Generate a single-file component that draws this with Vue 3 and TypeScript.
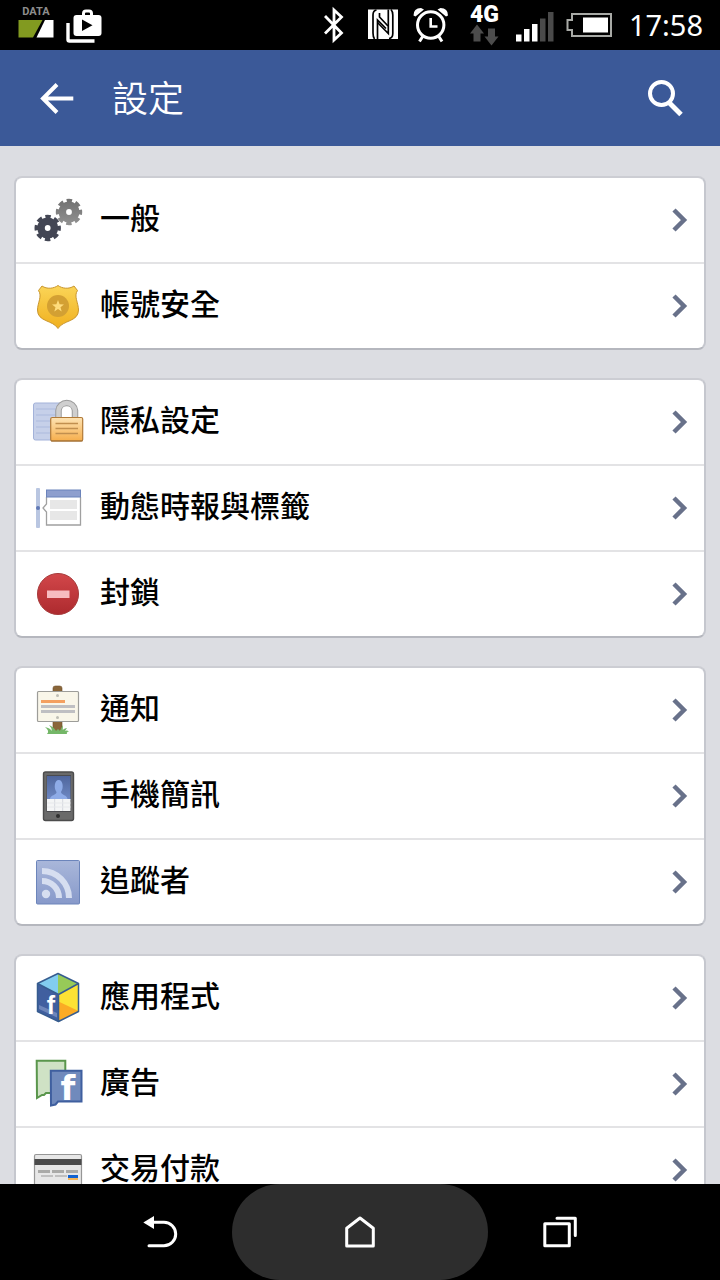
<script setup lang="ts">
interface Item {
  icon: string
  label: string
}

const groups: Item[][] = [
  [
    { icon: 'gears', label: '一般' },
    { icon: 'shield', label: '帳號安全' },
  ],
  [
    { icon: 'lock', label: '隱私設定' },
    { icon: 'timeline', label: '動態時報與標籤' },
    { icon: 'block', label: '封鎖' },
  ],
  [
    { icon: 'sign', label: '通知' },
    { icon: 'phone', label: '手機簡訊' },
    { icon: 'feed', label: '追蹤者' },
  ],
  [
    { icon: 'cube', label: '應用程式' },
    { icon: 'ads', label: '廣告' },
    { icon: 'card', label: '交易付款' },
  ],
]
</script>

<template>
  <div class="screen">
    <div class="status">
      <div class="status-left">
        <svg width="36" height="50" viewBox="0 0 36 50">
          <text x="18" y="15" text-anchor="middle" class="data-text">DATA</text>
          <path d="M0.5 20H24.5L15 37.5H0.5Z" fill="#829a20" />
          <path d="M27 20H35.5V37.5H18.5Z" fill="#fff" />
        </svg>
        <svg width="36" height="50" viewBox="0 0 36 50">
          <path d="M2 23V39.5Q2 41 3.5 41H28.5" fill="none" stroke="#fff" stroke-width="3.4" />
          <path d="M17.5 16V13.5Q17.5 11 20 11H23Q25.5 11 25.5 13.5V16" fill="none" stroke="#fff" stroke-width="3" />
          <rect x="7.5" y="15" width="28" height="21" rx="3" fill="#fff" />
          <path d="M16 19.5V31L26.5 25.3Z" fill="#000" />
        </svg>
      </div>
      <div class="status-right">
        <svg width="32" height="50" viewBox="0 0 32 50">
          <path d="M1 16L17.5 33L10 40V10L17.5 17L1 33.5" fill="none" stroke="#fff" stroke-width="2.8" />
        </svg>
        <svg width="32" height="50" viewBox="0 0 32 50">
          <rect y="9.500" width="30" height="29.500" fill="#fff" />
          <g fill="none" stroke="#000" stroke-width="1.700">
            <path d="M8.500 10Q5 10.500 5 15V33Q5 37 6.500 39" />
            <path d="M23 9.500Q24.800 11.500 24.800 15V33.500Q24.800 38 21 38.500" />
            <path d="M9.500 39V20L18 28.500" />
            <path d="M20.300 9.500V33.500L9.500 22.500" />
            <path d="M20 26L11.500 17V13" />
          </g>
        </svg>
        <svg width="44" height="50" viewBox="0 0 44 50">
          <path d="M1.500 15.500Q1.500 8 9 8L12 9.500L3.500 16.500ZM36 15.500Q36 8 28.500 8L25.500 9.500L34 16.500Z" fill="#fff" />
          <circle cx="18.700" cy="25" r="13.200" fill="none" stroke="#fff" stroke-width="3" />
          <path d="M18.700 18V26.500H25.500" fill="none" stroke="#fff" stroke-width="2.600" />
          <path d="M11 36L7.500 41.500M26.500 36L30 41.500" stroke="#fff" stroke-width="3" />
        </svg>
        <svg width="36" height="50" viewBox="0 0 36 50">
          <text x="16.500" y="22" text-anchor="middle" class="net-text">4G</text>
          <path d="M9 24.500L16 33.500H12.500V41.500H5.500V33.500H2Z" fill="#4c4c4c" />
          <path d="M23.500 45.500L30.500 36.500H27V28.500H20V36.500H16.500Z" fill="#4c4c4c" />
        </svg>
        <svg width="38" height="50" viewBox="0 0 38 50">
          <path d="M0 34.500H5.500V41.500H0ZM8 29H13.500V41.500H8ZM16 24H21.500V41.500H16Z" fill="#fff" />
          <path d="M24 18.500H29.500V41.500H24ZM32 12H37.500V41.500H32Z" fill="#4a4a4a" />
        </svg>
        <svg width="51" height="50" viewBox="0 0 51 50">
          <path d="M6 14H45V36H6V30H1.500V20H6Z" fill="none" stroke="#a8aaa6" stroke-width="2" />
          <rect x="17" y="17.500" width="25" height="15" fill="#fff" />
        </svg>
        <time class="clock">17:58</time>
      </div>
    </div>

    <header class="bar">
      <button type="button" class="bare" aria-label="返回">
        <svg width="34" height="32" viewBox="0 0 34 32">
          <path d="M33.300 16.500H3M17 2.500L3 16.500L17 30.500" fill="none" stroke="#fff" stroke-width="4" />
        </svg>
      </button>
      <h1>設定</h1>
      <button type="button" class="bare" aria-label="搜尋">
        <svg width="36" height="38" viewBox="0 0 36 38">
          <circle cx="13.500" cy="14.500" r="11.500" fill="none" stroke="#fff" stroke-width="4" />
          <path d="M21.500 24L33 35.500" stroke="#fff" stroke-width="5" />
        </svg>
      </button>
    </header>

    <main class="content">
      <nav v-for="(group, g) in groups" :key="g" class="group">
        <a v-for="item in group" :key="item.icon" class="row" href="#">
          <svg class="icon" width="56" height="60" viewBox="0 0 56 60" aria-hidden="true">
            <template v-if="item.icon === 'gears'">
              <defs>
                <linearGradient id="gearLight" gradientUnits="userSpaceOnUse" x1="0" y1="9" x2="0" y2="35">
                  <stop offset="0" stop-color="#707070" /><stop offset="1" stop-color="#929292" />
                </linearGradient>
              </defs>
              <g fill="none" stroke="url(#gearLight)">
                <circle cx="39" cy="22" r="6.700" stroke-width="7.600" />
                <circle cx="39" cy="22" r="11" stroke-width="4.400" stroke-dasharray="5.200 3.440" stroke-dashoffset="2.600" />
              </g>
              <g fill="none" stroke="#434654">
                <circle cx="17.700" cy="38" r="6.700" stroke-width="7.600" />
                <circle cx="17.700" cy="38" r="11" stroke-width="4.400" stroke-dasharray="5.200 3.440" stroke-dashoffset="2.600" />
              </g>
            </template>

            <template v-else-if="item.icon === 'shield'">
              <defs>
                <linearGradient id="gold" x1="0" y1="0" x2="0" y2="1">
                  <stop offset="0" stop-color="#fbd558" /><stop offset="1" stop-color="#f0b01f" />
                </linearGradient>
              </defs>
              <path d="M28 9.500C24 12.500 17 13.500 12 10L8.500 14.500C12.500 20 7.500 27 7.500 34C7.500 46 23 44 28 52.500C33 44 48.500 46 48.500 34C48.500 27 43.500 20 47.500 14.500L44 10C39 13.500 32 12.500 28 9.500Z" fill="url(#gold)" stroke="#c9962f" />
              <circle cx="28" cy="30" r="11" fill="#d3a033" />
              <path d="M28 24L29.600 28.200L34 28.400L30.500 31.200L31.700 35.500L28 33L24.300 35.500L25.500 31.200L22 28.400L26.400 28.200Z" fill="#ffdc7c" />
            </template>

            <template v-else-if="item.icon === 'lock'">
              <defs>
                <linearGradient id="brass" x1="0" y1="0" x2="0" y2="1">
                  <stop offset="0" stop-color="#fde3b4" /><stop offset="1" stop-color="#f6ae4c" />
                </linearGradient>
              </defs>
              <rect x="3.500" y="11" width="32" height="37" rx="2" fill="#c6d0e9" stroke="#a3b2d9" />
              <path d="M6 17H26M6 23H26M6 29H21M6 35H21M6 41H21" stroke="#b9c5e3" stroke-width="2" />
              <path d="M28.500 26V18.500A8.300 8.300 0 0 1 45 18.500V26" fill="#fff" stroke="#9b9b9b" stroke-width="6.500" />
              <path d="M28.500 26V18.500A8.300 8.300 0 0 1 45 18.500V26" fill="none" stroke="#cfcfcf" stroke-width="4.500" />
              <rect x="20.700" y="25.500" width="32" height="23.500" rx="1.500" fill="url(#brass)" stroke="#b17a38" stroke-width="1.200" />
              <path d="M21 49H52.500" stroke="#9c6c35" />
              <path d="M25.500 31.500H48M25.500 36.500H48M25.500 41.500H48" stroke="#c18f4f" stroke-width="1.600" />
            </template>

            <template v-else-if="item.icon === 'timeline'">
              <rect x="6" y="10" width="4" height="40" rx="1" fill="#b9c6e1" />
              <circle cx="8" cy="30" r="2" fill="#6079b5" />
              <path d="M16.500 19V26L13 30L16.500 34V47H50.500V19" fill="#fff" stroke="#a0a0a0" stroke-width="1.300" />
              <rect x="16.500" y="12" width="34" height="7" fill="#8e9fce" stroke="#6b83bb" />
              <path d="M20 22H47V31H20ZM20 33H47V42H20Z" fill="#e7e7e7" />
            </template>

            <template v-else-if="item.icon === 'block'">
              <defs>
                <linearGradient id="red" x1="0" y1="0" x2="0" y2="1">
                  <stop offset="0" stop-color="#d2474a" /><stop offset="1" stop-color="#ad2a2e" />
                </linearGradient>
              </defs>
              <circle cx="28" cy="30" r="20.500" fill="url(#red)" stroke="#a63a3a" />
              <rect x="17" y="26.500" width="22.500" height="7.500" fill="#f7bcc0" />
            </template>

            <template v-else-if="item.icon === 'sign'">
              <path d="M23 8Q23 6 25.500 6H29.500Q32 6 32 8V50Q27 52 23 50Z" fill="#8a6639" stroke="#6d4f2a" stroke-width="0.600" />
              <rect x="7.500" y="11.500" width="41" height="30" rx="1" fill="#f9f6e9" stroke="#9d9d99" stroke-width="1.200" />
              <circle cx="27.500" cy="15.500" r="1.500" fill="#bdbdb5" />
              <circle cx="27.500" cy="37.500" r="1.500" fill="#bdbdb5" />
              <path d="M11 21.500H35" stroke="#f4a060" stroke-width="3" />
              <path d="M11 26.500H45M11 31.500H45" stroke="#bfbfc2" stroke-width="3" />
              <path d="M17 54Q20 51 15 47Q20 48 22 51Q22 48 19 45Q24 47 26 51L28 49L30 51Q31 48 33 45L32.500 50Q35 48 37 48L35 51Q37 50 39 51.500Q36 52 37 54Z" fill="#74b768" />
            </template>

            <template v-else-if="item.icon === 'phone'">
              <defs>
                <linearGradient id="display" x1="0" y1="0" x2="0" y2="1">
                  <stop offset="0" stop-color="#4f669d" /><stop offset="1" stop-color="#6f89c4" />
                </linearGradient>
              </defs>
              <rect x="13.500" y="6" width="30" height="48.500" rx="2" fill="#6a6a6a" stroke="#4c4c4c" stroke-width="1.400" />
              <rect x="16.500" y="9" width="24.500" height="37" fill="#4b4b4f" />
              <rect x="17" y="10" width="23.500" height="24" fill="url(#display)" />
              <path d="M20 33C20 29 27 29 26.500 26C23.500 22 24.500 14 28.700 14C33 14 34 22 31 26C31 29 37.500 29 37.500 33Z" fill="#8eabe7" />
              <rect x="17" y="33" width="23.500" height="12" fill="#f4f5f6" />
              <path d="M24.700 33V45M32.700 33V45" stroke="#d5d8de" />
              <path d="M17 37H40.500M17 41H40.500" stroke="#e6e8eb" />
              <circle cx="28" cy="50" r="2" fill="#2f2f2f" />
            </template>

            <template v-else-if="item.icon === 'feed'">
              <defs>
                <linearGradient id="feedBlue" x1="0" y1="0" x2="0" y2="1">
                  <stop offset="0" stop-color="#a9b7da" /><stop offset="1" stop-color="#8799ca" />
                </linearGradient>
              </defs>
              <rect x="6.500" y="8.500" width="43" height="43.500" rx="1" fill="url(#feedBlue)" stroke="#6c85bb" />
              <circle cx="16" cy="42" r="4.200" fill="#d6def0" />
              <path d="M12 29A17 17 0 0 1 29 46M12 19A27 27 0 0 1 39 46" fill="none" stroke="#d6def0" stroke-width="6" />
            </template>

            <template v-else-if="item.icon === 'cube'">
              <path d="M28 5.500V26.500L7.500 15.500Z" fill="#82cdf0" />
              <path d="M28 5.500L48.500 15.500L28 26.500Z" fill="#97ca58" />
              <path d="M7.500 15.500L28.500 26.500V53.500L7.500 43.500Z" fill="#405f9f" />
              <path d="M28.500 26.500L48.500 15.500V43.500L28.500 53.500Z" fill="#fde234" />
              <path d="M28.500 33.500L48.500 43L28.500 53.500Z" fill="#fbab25" />
              <path d="M9 37L27 45V49.500L9 41Z" fill="#6d86ba" />
              <path d="M28 5.500L48.500 15.500V43.500L28.500 53.500L7.500 43.500V15.500ZM7.500 15.500L28.500 26.500L48.500 15.500M28.500 26.500V53.500" fill="none" stroke="#365c8f" stroke-width="1.500" stroke-linejoin="round" />
              <text x="21" y="46" text-anchor="middle" class="cube-f">f</text>
            </template>

            <template v-else-if="item.icon === 'ads'">
              <path d="M6.700 6.700H35.300V39H16L14 41H12L7 44Z" fill="#cfe2c5" stroke="#5a964c" stroke-width="2" />
              <path d="M20.800 16.800H51.500V47.500H28L25.500 50.500L21 51.500Z" fill="#708abc" stroke="#3f5f9f" stroke-width="2" />
              <text x="38" y="46" text-anchor="middle" class="ads-f">f</text>
            </template>

            <template v-else>
              <rect x="4.500" y="14.500" width="47" height="33" rx="1.500" fill="#e7e7e7" stroke="#969696" stroke-width="1.200" />
              <rect x="4.500" y="19" width="47" height="6" fill="#4b4b4b" />
              <path d="M8 31.500H20M22 31.500H34M36 31.500H48" stroke="#aaaaa8" stroke-width="3" />
              <path d="M11 36H23M25 36H37" stroke="#c0c0c0" stroke-width="2" />
              <rect x="38" y="35" width="10" height="3" fill="#1262d0" />
              <rect x="38" y="38" width="10" height="2" fill="#f5b455" />
            </template>
          </svg>
          <span class="label">{{ item.label }}</span>
          <svg width="16" height="24" viewBox="0 0 16 24" aria-hidden="true">
            <path d="M2 2L12 12L2 22" fill="none" stroke="#68718a" stroke-width="4.500" />
          </svg>
        </a>
      </nav>
    </main>

    <footer class="nav">
      <button type="button" class="key" aria-label="返回">
        <svg width="40" height="40" viewBox="0 0 40 40">
          <path d="M3.300 10.500L14 4V17Z" fill="#fff" />
          <path d="M13 10.300H24A11.700 11.700 0 0 1 24 33.700H9" fill="none" stroke="#fff" stroke-width="3" stroke-linecap="round" />
        </svg>
      </button>
      <button type="button" class="key home" aria-label="主畫面">
        <svg width="40" height="40" viewBox="0 0 40 40">
          <path d="M20 6L33.300 16.300V34H6.700V16.300Z" fill="none" stroke="#fff" stroke-width="3" stroke-linejoin="round" />
        </svg>
      </button>
      <button type="button" class="key" aria-label="最近使用">
        <svg width="40" height="40" viewBox="0 0 40 40">
          <g fill="none" stroke="#fff" stroke-width="3" stroke-linejoin="round">
            <rect x="4.800" y="11.800" width="24.500" height="22" />
            <path d="M17 6.300H35.300V23.500" stroke-linecap="round" />
          </g>
        </svg>
      </button>
    </footer>
  </div>
</template>

<style>
body {
  margin: 0;
}
</style>

<style scoped>
.screen {
  display: flex;
  flex-direction: column;
  height: 100vh;
  background: #dcdde2;
  font-family: "Noto Sans CJK TC", "Noto Sans", sans-serif;
}

svg {
  display: block;
  flex: none;
}

button {
  margin: 0;
  padding: 0;
  border: 0;
  background: none;
  cursor: pointer;
}

.status {
  display: flex;
  flex: none;
  justify-content: space-between;
  height: 50px;
  padding: 0 17px 0 18px;
  background: #000;
}

.status-left,
.status-right {
  display: flex;
  align-items: center;
  gap: 12px;
}

.clock {
  color: #fff;
  font-family: "Noto Sans", sans-serif;
  font-size: 29px;
  line-height: 50px;
}

.data-text {
  fill: #8d8d8d;
  font: 700 11px Roboto, sans-serif;
}

.net-text {
  fill: #fff;
  font: 900 23px Roboto, sans-serif;
}

.cube-f {
  fill: #fff;
  font: 700 25px "Liberation Sans", sans-serif;
}

.ads-f {
  fill: #fff;
  font: 700 34px "DejaVu Sans", sans-serif;
}

.bar {
  display: flex;
  flex: none;
  align-items: center;
  height: 96px;
  padding: 0 36px 0 40px;
  background: #3b5998;
}

.bar h1 {
  flex: 1;
  margin: 0 0 0 38px;
  padding-bottom: 4px;
  color: #fff;
  font-size: 36px;
  font-weight: 350;
  line-height: 48px;
}

.content {
  display: flex;
  flex: 1;
  flex-direction: column;
  gap: 28px;
  min-height: 0;
  padding: 30px 14px;
  overflow-y: auto;
  scrollbar-width: none;
}

.group {
  flex: none;
  border: 2px solid;
  border-color: #cccdd3 #c5c7ce #b5b7be;
  border-radius: 8px;
  background: #fff;
}

.row {
  display: flex;
  align-items: center;
  height: 84px;
  padding: 0 16px 0 14px;
  color: #000;
  text-decoration: none;
}

.row + .row {
  border-top: 2px solid #e3e3e5;
}

.label {
  flex: 1;
  margin-left: 14px;
  padding-bottom: 8px;
  font-size: 30px;
  font-weight: 500;
  line-height: 40px;
}

.nav {
  display: flex;
  flex: none;
  justify-content: center;
  height: 96px;
  background: #000;
}

.key {
  display: flex;
  align-items: center;
  justify-content: center;
  width: 144px;
}

.home {
  width: 256px;
  border-radius: 48px;
  background: #2d2d2d;
}
</style>
